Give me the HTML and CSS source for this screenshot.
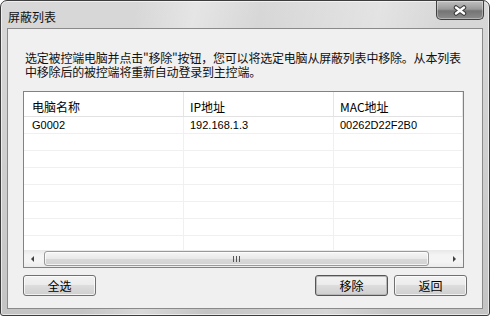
FILE: index.html
```html
<!DOCTYPE html>
<html lang="zh-CN">
<head>
  <meta charset="UTF-8">
  <title>屏蔽列表</title>
  <link rel="stylesheet" href="styles.css">
</head>
<body>
  <div class="window">
    <div class="titlebar">
      <span class="title">屏蔽列表</span>
      <button class="close" aria-label="关闭">
        <svg width="14" height="11" viewBox="0 0 14 11">
          <path d="M3 2.5 L11 8.5 M11 2.5 L3 8.5" stroke="#3a3a3a" stroke-width="4.5" stroke-linecap="round"/>
          <path d="M3 2.5 L11 8.5 M11 2.5 L3 8.5" stroke="#ffffff" stroke-width="2.4" stroke-linecap="round"/>
        </svg>
      </button>
    </div>

    <div class="client">
      <p class="hint">选定被控端电脑并点击"移除"按钮，您可以将选定电脑从屏蔽列表中移除。从本列表<br>中移除后的被控端将重新自动登录到主控端。</p>

      <div class="listview">
        <div class="lv-head">
          <div>电脑名称</div>
          <div>IP地址</div>
          <div>MAC地址</div>
        </div>
        <div class="lv-rows">
          <div class="lv-row"><div>G0002</div><div>192.168.1.3</div><div>00262D22F2B0</div></div>
          <div class="lv-row"><div></div><div></div><div></div></div>
          <div class="lv-row"><div></div><div></div><div></div></div>
          <div class="lv-row"><div></div><div></div><div></div></div>
          <div class="lv-row"><div></div><div></div><div></div></div>
          <div class="lv-row"><div></div><div></div><div></div></div>
          <div class="lv-row"><div></div><div></div><div></div></div>
          <div class="lv-row"><div></div><div></div><div></div></div>
        </div>
        <div class="hscroll">
          <div class="sb-btn"><span class="arrow-left"></span></div>
          <div class="sb-thumb"><span class="grip"></span></div>
          <div class="sb-track"></div>
          <div class="sb-btn"><span class="arrow-right"></span></div>
        </div>
      </div>

      <div class="actions">
        <button class="btn">全选</button>
        <div class="actions-right">
          <button class="btn default">移除</button>
          <button class="btn">返回</button>
        </div>
      </div>
    </div>
  </div>
</body>
</html>
```

FILE: styles.css
```css
* {
  box-sizing: border-box;
}
body {
  margin: 0;
  font-family: "Noto Sans CJK SC", sans-serif;
  font-size: 12px;
  color: #000;
  background: #fff;
}
.window {
  width: 490px;
  height: 316px;
  padding: 0 6px 6px;
  display: flex;
  flex-direction: column;
  border: 1px solid #3d3d3d;
  border-radius: 7px 7px 3px 3px;
  background:
    linear-gradient(100deg, rgba(255,255,255,0) 25%, rgba(255,255,255,.35) 36%, rgba(255,255,255,0) 48%, rgba(255,255,255,.3) 70%, rgba(255,255,255,0) 82%),
    linear-gradient(#d8d8d8, #cfcfcf 50%, #c4c4c4);
  box-shadow: inset 0 0 0 1px rgba(255,255,255,.6);
}
.titlebar {
  height: 27px;
  display: flex;
  justify-content: space-between;
  align-items: flex-start;
}
.title {
  padding: 9px 0 0 1px;
  line-height: 13px;
  color: #111;
}
.close {
  width: 48px;
  height: 19px;
  margin-right: -1px;
  padding: 0;
  display: flex;
  align-items: center;
  justify-content: center;
  border: 1px solid #404040;
  border-top: none;
  border-radius: 0 0 5px 5px;
  background: linear-gradient(#c0c0c0, #9a9a9a 45%, #747474 55%, #8c8c8c);
  box-shadow: inset 0 0 0 1px rgba(255,255,255,.35);
}
.client {
  flex: 1;
  padding: 22px 15px 0;
  display: flex;
  flex-direction: column;
  border: 1px solid #8a8a8a;
  background: #f0f0f0;
}
.hint {
  margin: 0 0 12px 2px;
  line-height: 14px;
  letter-spacing: -0.2px;
  white-space: nowrap;
  color: #111;
}
.listview {
  height: 177px;
  margin-right: 3px;
  display: flex;
  flex-direction: column;
  border: 1px solid #828282;
  background: #fff;
}
.lv-head,
.lv-row {
  display: grid;
  grid-template-columns: 160px 150px 1fr;
}
.lv-head {
  height: 25px;
  border-bottom: 1px solid #e2e2e2;
}
.lv-head div {
  padding: 8px 0 0 6px;
  line-height: 13px;
  border-right: 1px solid #e5e5e5;
}
.lv-head div:first-child,
.lv-row div:first-child {
  padding-left: 8px;
}
.lv-rows {
  flex: 1;
  overflow: hidden;
}
.lv-row {
  height: 17px;
  border-bottom: 1px solid #f0f0f0;
  font-family: "Liberation Sans", sans-serif;
  font-size: 11px;
}
.lv-row div {
  padding: 1px 0 0 6px;
  line-height: 15px;
  border-right: 1px solid #f0f0f0;
}
.hscroll {
  height: 17px;
  display: flex;
  align-items: center;
  background: linear-gradient(#e8e8e8, #f4f4f4 30%, #f4f4f4 70%, #ebebeb);
}
.sb-btn {
  width: 17px;
  height: 17px;
  display: flex;
  align-items: center;
  justify-content: center;
}
.arrow-left {
  border-top: 3px solid transparent;
  border-bottom: 3px solid transparent;
  border-right: 3px solid #404040;
}
.arrow-right {
  border-top: 3px solid transparent;
  border-bottom: 3px solid transparent;
  border-left: 3px solid #404040;
}
.sb-thumb {
  width: 385px;
  height: 15px;
  margin-left: 3px;
  display: flex;
  align-items: center;
  justify-content: center;
  border: 1px solid #999;
  border-radius: 3px;
  background: linear-gradient(#f6f6f6, #e9e9e9 50%, #d9d9d9 50%, #d2d2d2);
  box-shadow: inset 0 0 0 1px rgba(255,255,255,.7);
}
.grip {
  width: 7px;
  height: 6px;
  background: repeating-linear-gradient(90deg, #555 0 1px, transparent 1px 3px);
}
.sb-track {
  flex: 1;
}
.actions {
  margin-top: 7px;
  display: flex;
  justify-content: space-between;
}
.actions-right {
  display: flex;
  gap: 6px;
}
.btn {
  width: 73px;
  height: 21px;
  padding: 0;
  font-family: "Noto Sans CJK SC", sans-serif;
  font-size: 12px;
  line-height: 19px;
  color: #000;
  border: 1px solid #707070;
  border-radius: 3px;
  background: linear-gradient(#f2f2f2, #ebebeb 50%, #dddddd 50%, #cfcfcf);
  box-shadow: inset 0 0 0 1px rgba(255,255,255,.7);
}
.btn.default {
  border-color: #555;
  box-shadow: inset 0 0 0 1px #b8b8b8;
}
```
